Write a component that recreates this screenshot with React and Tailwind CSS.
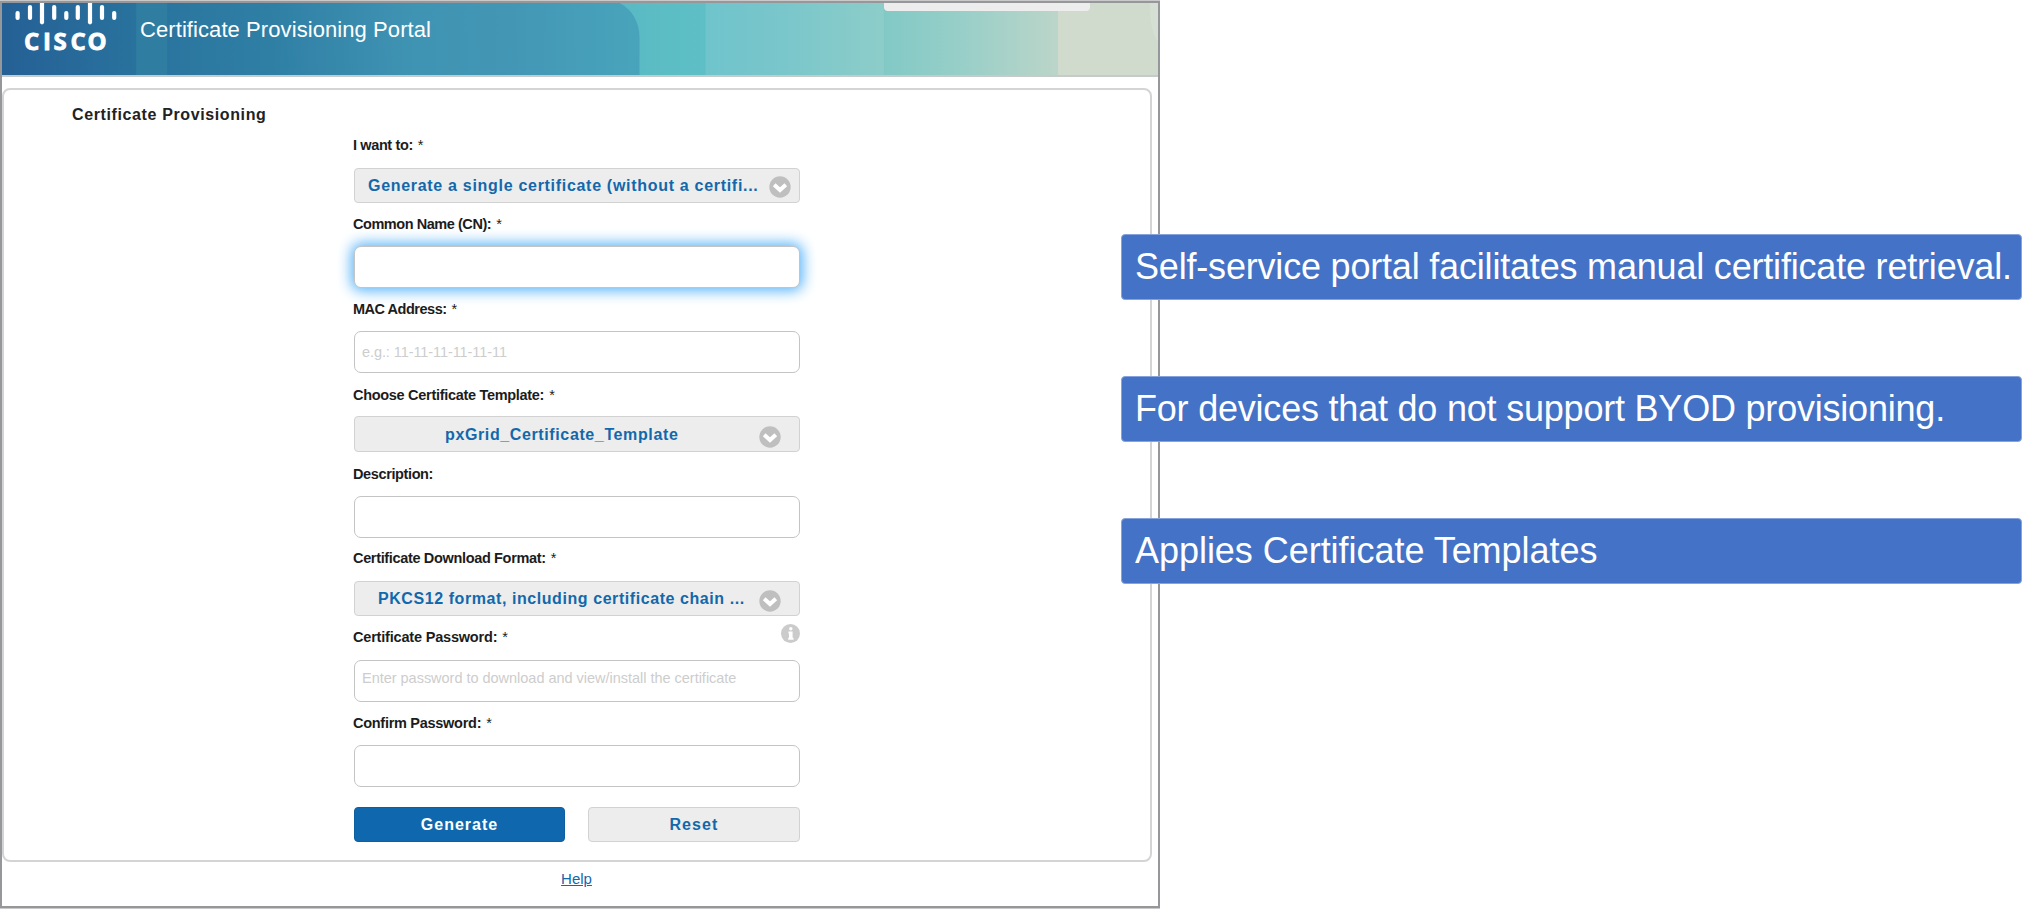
const BARS = [
  [17.6, 11, 20],
  [30, 5, 20],
  [42, 0, 24.3],
  [54.2, 5, 20],
  [66.3, 11, 20],
  [77.8, 5, 20],
  [90, 0, 24.3],
  [102, 5, 20],
  [114.2, 11, 20],
];

function CiscoLogo() {
  return (
    <svg className="block h-[54px] w-[125px] shrink-0" viewBox="3 3 125 54">
      {BARS.map(([x, top, bottom]) => (
        <line
          key={x}
          x1={x}
          x2={x}
          y1={top + 2}
          y2={bottom - 2}
          stroke="#fff"
          strokeWidth="4.2"
          strokeLinecap="round"
        />
      ))}
      <text
        x="24 43 53.6 70.6 87.6"
        y="49.8"
        fill="#fff"
        stroke="#fff"
        strokeWidth="0.8"
        fontFamily="'Open Sans', sans-serif"
        fontWeight="700"
        fontSize="24"
      >
        CISCO
      </text>
    </svg>
  );
}

function HeaderBackdrop() {
  return (
    <svg
      className="absolute inset-0 h-full w-full"
      viewBox="3 3 1155 73"
      preserveAspectRatio="none"
    >
      <defs>
        <linearGradient id="deep" gradientUnits="userSpaceOnUse" x1="3" x2="640" y1="40" y2="30">
          <stop offset="0" stopColor="#256095" />
          <stop offset="0.22" stopColor="#29739e" />
          <stop offset="0.42" stopColor="#2f7fa5" />
          <stop offset="0.65" stopColor="#4094b3" />
          <stop offset="0.8" stopColor="#4397b5" />
          <stop offset="1" stopColor="#48a4bb" />
        </linearGradient>
        <linearGradient id="teal">
          <stop offset="0" stopColor="#58b8c3" />
          <stop offset="1" stopColor="#5ec0c6" />
        </linearGradient>
        <linearGradient id="aqua">
          <stop offset="0" stopColor="#6fc4cb" />
          <stop offset="0.42" stopColor="#79c6cb" />
          <stop offset="1" stopColor="#8dcdc9" />
        </linearGradient>
        <linearGradient id="sage">
          <stop offset="0" stopColor="#82c9c6" />
          <stop offset="0.45" stopColor="#98cfc8" />
          <stop offset="1" stopColor="#bcd5c9" />
        </linearGradient>
      </defs>
      <rect x="600" y="3" width="107" height="73" fill="url(#teal)" />
      <path d="M3 3H620C632 9 640 22 640 38V76H3Z" fill="url(#deep)" />
      <rect x="137" y="3" width="31" height="73" fill="#2f7da0" />
      <rect x="706" y="3" width="179" height="73" fill="url(#aqua)" />
      <rect x="884" y="3" width="175" height="73" fill="url(#sage)" />
      <rect x="1058" y="3" width="100" height="73" fill="#d0dacd" />
      <path d="M1150 3H1158V42C1152 34 1150 22 1150 3Z" fill="#d5dfd3" />
    </svg>
  );
}

function Label({ text, required = true, className, info }) {
  return (
    <div className={`flex items-start justify-between ${className}`}>
      <div className="-ml-px flex gap-[5px] whitespace-nowrap text-[14.5px] leading-4 text-[#1c1c1c]">
        <span className="font-bold">{text}</span>
        {required && <span>*</span>}
      </div>
      {info && (
        <svg className="mt-[-5px] block h-[19px] w-[19px]" viewBox="0 0 19 19">
          <circle cx="9.5" cy="9.5" r="9.5" fill="#cbcbcb" />
          <circle cx="9.8" cy="4.7" r="1.7" fill="#fff" />
          <path d="M7.4 7.6h4.2v6.2h.9v2H7.2v-2h.8V9.4h-.6z" fill="#fff" />
        </svg>
      )}
    </div>
  );
}

function Select({ text, className = "h-[35px]", textClass, iconClass }) {
  return (
    <button
      className={`flex w-full items-center justify-between rounded-[4px] border border-[#d2d2d2] bg-[#ededed] text-base font-bold text-[#1268ab] ${className}`}
    >
      <span className={`whitespace-nowrap leading-5 ${textClass}`}>{text}</span>
      <svg className={`block h-[22px] w-[22px] ${iconClass}`} viewBox="0 0 22 22">
        <circle cx="11" cy="11" r="10.7" fill="#bfbfbf" />
        <path d="M5.2 8.8l5.8 5.2 5.8-5.2" fill="none" stroke="#fff" strokeWidth="4" />
      </svg>
    </button>
  );
}

function Input({ placeholder = "", className = "" }) {
  return (
    <input
      readOnly
      placeholder={placeholder}
      className={`block h-[42px] w-full rounded-[7px] border border-[#c4c4c4] bg-white pl-[7px] text-[14.5px] outline-none placeholder:text-[#cdcdcd] ${className}`}
    />
  );
}

const CALLOUTS = [
  ["Self-service portal facilitates manual certificate retrieval.", "tracking-[-0.19px]"],
  ["For devices that do not support BYOD provisioning.", "tracking-[-0.21px]"],
  ["Applies Certificate Templates", "tracking-[-0.04px]"],
];

export default function App() {
  return (
    <div className="relative h-[909px] w-[2022px] overflow-hidden bg-white font-['Liberation_Sans',Arial,sans-serif]">
      <div className="w-[1160px] border-y border-[#c9c9c9]">
        <div className="flex h-[907px] flex-col border-2 border-[#96979b]">
          <header className="relative flex h-[74px] shrink-0 items-start border-b-2 border-[#c5cbcb]">
            <HeaderBackdrop />
            <div className="relative ml-px">
              <CiscoLogo />
            </div>
            <h1 className="relative ml-[12px] mt-[15px] whitespace-nowrap text-[22px] leading-6 tracking-[0.08px] text-white">
              Certificate Provisioning Portal
            </h1>
            <div className="absolute left-[882px] top-0 h-2 w-[206px] rounded-b bg-[#ededed]" />
          </header>

          <main className="mt-[11px] h-[774px] w-[1150px] shrink-0 rounded-[8px] border-2 border-[#d4d4d4]">
            <h2 className="ml-[68px] mt-[16px] h-[18px] whitespace-nowrap text-base leading-[18px] font-bold tracking-[0.62px] text-[#222]">
              Certificate Provisioning
            </h2>
            <form className="ml-[350px] w-[446px]">
              <Label text="I want to:" className="h-[44px] pt-[13px] tracking-[-0.38px]" />
              <Select
                text="Generate a single certificate (without a certifi..."
                textClass="ml-[13px] tracking-[0.7px]"
                iconClass="mr-2 mt-[3px]"
              />
              <Label text="Common Name (CN):" className="h-[43px] pt-[13px] tracking-[-0.45px]" />
              <Input className="shadow-[0_0_14px_3px_#5ab4f8]" />
              <Label text="MAC Address:" className="h-[43px] pt-[13px] tracking-[-0.48px]" />
              <Input placeholder="e.g.: 11-11-11-11-11-11" className="tracking-[-0.08px]" />
              <Label text="Choose Certificate Template:" className="h-[43px] pt-[14px] tracking-[-0.3px]" />
              <Select
                text="pxGrid_Certificate_Template"
                className="h-[36px]"
                textClass="ml-[90px] mt-[2px] tracking-[0.62px]"
                iconClass="mr-[18px] mt-[6px]"
              />
              <Label
                text="Description:"
                required={false}
                className="h-[44px] pt-[14px] tracking-[-0.38px]"
              />
              <Input />
              <Label text="Certificate Download Format:" className="h-[43px] pt-[12px] tracking-[-0.34px]" />
              <Select
                text="PKCS12 format, including certificate chain ..."
                textClass="ml-[23px] tracking-[0.57px]"
                iconClass="mr-[18px] mt-[4px]"
              />
              <Label text="Certificate Password:" info className="h-[44px] pt-[13px] tracking-[-0.19px]" />
              <Input
                placeholder="Enter password to download and view/install the certificate"
                className="pb-[6px] tracking-[-0.02px]"
              />
              <Label text="Confirm Password:" className="h-[43px] pt-[13px] tracking-[-0.28px]" />
              <Input />
              <div className="mt-[20px] flex justify-between text-base font-bold">
                <button className="h-[35px] w-[211px] rounded-[4px] border border-[#0f5f9f] bg-[#0f68ae] tracking-[1px] text-white">
                  Generate
                </button>
                <button className="h-[35px] w-[212px] rounded-[4px] border border-[#d2d2d2] bg-[#ededed] tracking-[1.1px] text-[#1268ab]">
                  Reset
                </button>
              </div>
            </form>
          </main>
          <div className="mt-[7px] flex w-[1149px] justify-center">
            <a href="#" className="text-[15px] leading-[20px] text-[#1268ab] underline">
              Help
            </a>
          </div>
        </div>
      </div>

      <div className="absolute left-[1121px] top-[234px] flex w-[901px] flex-col gap-[76px]">
        {CALLOUTS.map(([text, tracking]) => (
          <div
            key={text}
            className={`flex h-[66px] items-center whitespace-nowrap rounded-[4px] border border-[#86a3db] bg-[#4472c6] pl-[13px] text-[36px] text-white ${tracking}`}
          >
            {text}
          </div>
        ))}
      </div>
    </div>
  );
}
